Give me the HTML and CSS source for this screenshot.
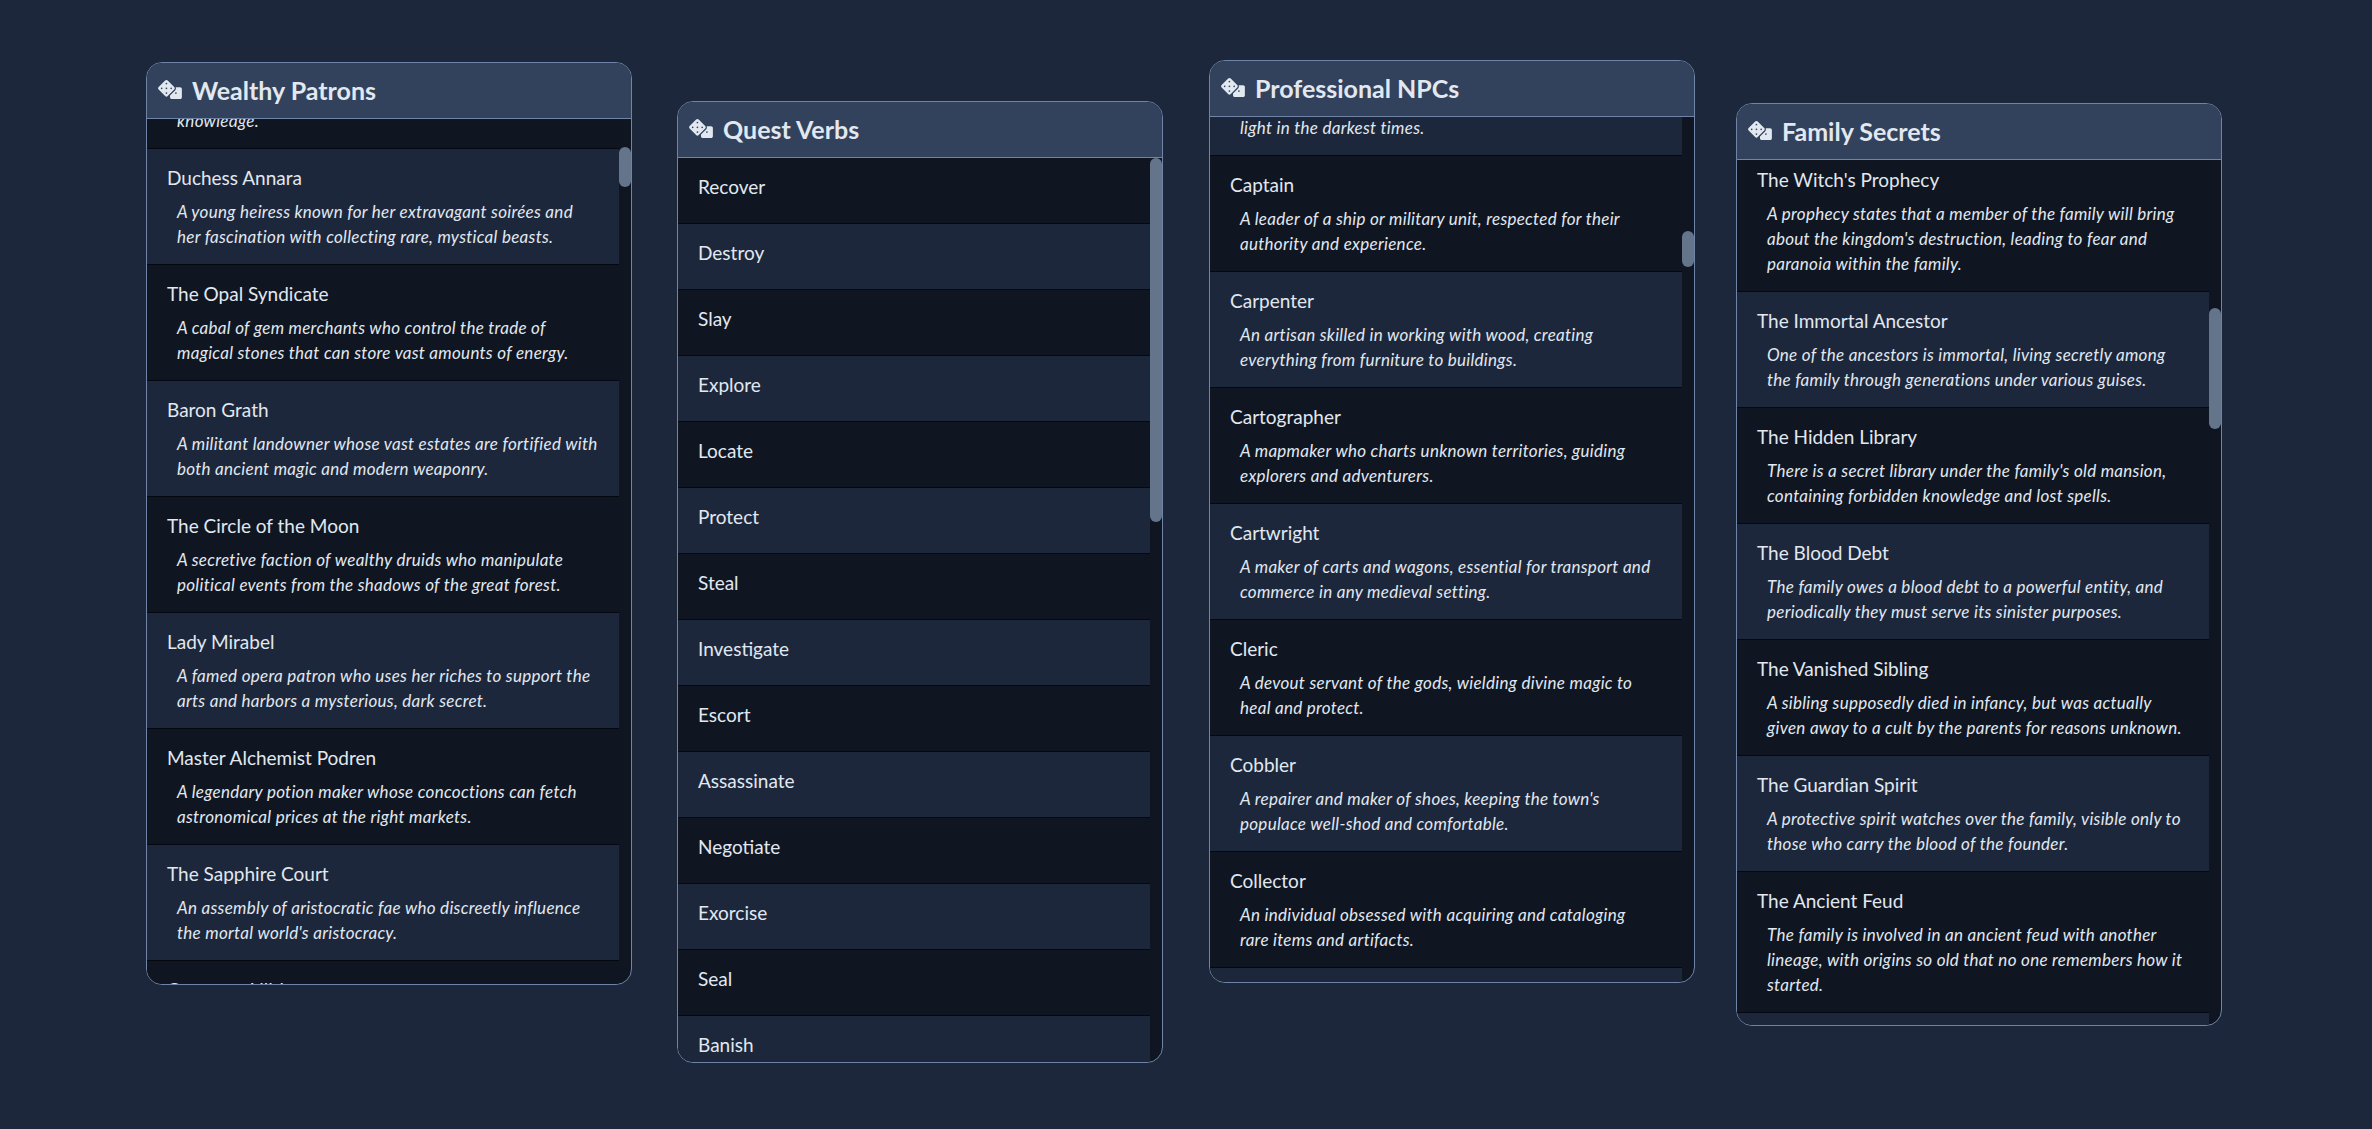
FILE: index.html
```html
<!DOCTYPE html>
<html>

<head>
  <meta charset="utf-8">
  <title>Random Tables</title>
  <link rel="stylesheet" href="styles.css">
</head>

<body>
  <svg class="defs">
    <symbol id="dice" viewBox="0 0 640 512">
      <path d="M592 192H473.26c12.69 29.59 7.12 65.2-17 89.32L320 417.58V464c0 26.51 21.49 48 48 48h224c26.51 0 48-21.49 48-48V240c0-26.51-21.49-48-48-48zM480 376c-13.25 0-24-10.75-24-24 0-13.26 10.75-24 24-24s24 10.74 24 24c0 13.25-10.75 24-24 24zm-46.37-186.7L258.7 14.37c-19.16-19.16-50.23-19.16-69.39 0L14.37 189.3c-19.16 19.16-19.16 50.23 0 69.39L189.3 433.63c19.16 19.16 50.23 19.16 69.39 0L433.63 258.7c19.17-19.17 19.17-50.24 0-69.4zM96 248c-13.25 0-24-10.75-24-24 0-13.26 10.75-24 24-24s24 10.74 24 24c0 13.25-10.75 24-24 24zm128 128c-13.25 0-24-10.75-24-24 0-13.26 10.75-24 24-24s24 10.74 24 24c0 13.25-10.75 24-24 24zm0-128c-13.25 0-24-10.75-24-24 0-13.26 10.75-24 24-24s24 10.74 24 24c0 13.25-10.75 24-24 24zm0-128c-13.25 0-24-10.75-24-24 0-13.26 10.75-24 24-24s24 10.74 24 24c0 13.25-10.75 24-24 24zm128 128c-13.25 0-24-10.75-24-24 0-13.26 10.75-24 24-24s24 10.74 24 24c0 13.25-10.75 24-24 24z" />
    </symbol>
  </svg>

  <div class="board">

    <section class="panel patrons">
      <h2 class="panel-head"><svg class="dice"><use href="#dice" /></svg>Wealthy Patrons</h2>
      <div class="list">
        <ul class="rows">
          <li class="row"><div class="name">The Arcane Benefactor</div><div class="desc">A reclusive collector who funds expeditions in search of lost<br>knowledge.</div></li>
          <li class="row"><div class="name">Duchess Annara</div><div class="desc">A young heiress known for her extravagant soirées and<br>her fascination with collecting rare, mystical beasts.</div></li>
          <li class="row"><div class="name">The Opal Syndicate</div><div class="desc">A cabal of gem merchants who control the trade of<br>magical stones that can store vast amounts of energy.</div></li>
          <li class="row"><div class="name">Baron Grath</div><div class="desc">A militant landowner whose vast estates are fortified with<br>both ancient magic and modern weaponry.</div></li>
          <li class="row"><div class="name">The Circle of the Moon</div><div class="desc">A secretive faction of wealthy druids who manipulate<br>political events from the shadows of the great forest.</div></li>
          <li class="row"><div class="name">Lady Mirabel</div><div class="desc">A famed opera patron who uses her riches to support the<br>arts and harbors a mysterious, dark secret.</div></li>
          <li class="row"><div class="name">Master Alchemist Podren</div><div class="desc">A legendary potion maker whose concoctions can fetch<br>astronomical prices at the right markets.</div></li>
          <li class="row"><div class="name">The Sapphire Court</div><div class="desc">An assembly of aristocratic fae who discreetly influence<br>the mortal world's aristocracy.</div></li>
          <li class="row"><div class="name">Countess Lilith</div></li>
        </ul>
        <div class="thumb"></div>
      </div>
    </section>

    <section class="panel verbs">
      <h2 class="panel-head"><svg class="dice"><use href="#dice" /></svg>Quest Verbs</h2>
      <div class="list">
        <ul class="rows">
          <li class="row"><div class="name">Recover</div></li>
          <li class="row"><div class="name">Destroy</div></li>
          <li class="row"><div class="name">Slay</div></li>
          <li class="row"><div class="name">Explore</div></li>
          <li class="row"><div class="name">Locate</div></li>
          <li class="row"><div class="name">Protect</div></li>
          <li class="row"><div class="name">Steal</div></li>
          <li class="row"><div class="name">Investigate</div></li>
          <li class="row"><div class="name">Escort</div></li>
          <li class="row"><div class="name">Assassinate</div></li>
          <li class="row"><div class="name">Negotiate</div></li>
          <li class="row"><div class="name">Exorcise</div></li>
          <li class="row"><div class="name">Seal</div></li>
          <li class="row"><div class="name">Banish</div></li>
        </ul>
        <div class="thumb"></div>
      </div>
    </section>

    <section class="panel npcs">
      <h2 class="panel-head"><svg class="dice"><use href="#dice" /></svg>Professional NPCs</h2>
      <div class="list">
        <ul class="rows">
          <li class="row"><div class="name">Candlemaker</div><div class="desc">A craftsman who makes candles and lanterns, providing<br>light in the darkest times.</div></li>
          <li class="row"><div class="name">Captain</div><div class="desc">A leader of a ship or military unit, respected for their<br>authority and experience.</div></li>
          <li class="row"><div class="name">Carpenter</div><div class="desc">An artisan skilled in working with wood, creating<br>everything from furniture to buildings.</div></li>
          <li class="row"><div class="name">Cartographer</div><div class="desc">A mapmaker who charts unknown territories, guiding<br>explorers and adventurers.</div></li>
          <li class="row"><div class="name">Cartwright</div><div class="desc">A maker of carts and wagons, essential for transport and<br>commerce in any medieval setting.</div></li>
          <li class="row"><div class="name">Cleric</div><div class="desc">A devout servant of the gods, wielding divine magic to<br>heal and protect.</div></li>
          <li class="row"><div class="name">Cobbler</div><div class="desc">A repairer and maker of shoes, keeping the town's<br>populace well-shod and comfortable.</div></li>
          <li class="row"><div class="name">Collector</div><div class="desc">An individual obsessed with acquiring and cataloging<br>rare items and artifacts.</div></li>
          <li class="row"><div class="name">Cook</div></li>
        </ul>
        <div class="thumb"></div>
      </div>
    </section>

    <section class="panel secrets">
      <h2 class="panel-head"><svg class="dice"><use href="#dice" /></svg>Family Secrets</h2>
      <div class="list">
        <ul class="rows">
          <li class="row"><div class="name">The Witch's Prophecy</div><div class="desc">A prophecy states that a member of the family will bring<br>about the kingdom's destruction, leading to fear and<br>paranoia within the family.</div></li>
          <li class="row"><div class="name">The Immortal Ancestor</div><div class="desc">One of the ancestors is immortal, living secretly among<br>the family through generations under various guises.</div></li>
          <li class="row"><div class="name">The Hidden Library</div><div class="desc">There is a secret library under the family's old mansion,<br>containing forbidden knowledge and lost spells.</div></li>
          <li class="row"><div class="name">The Blood Debt</div><div class="desc">The family owes a blood debt to a powerful entity, and<br>periodically they must serve its sinister purposes.</div></li>
          <li class="row"><div class="name">The Vanished Sibling</div><div class="desc">A sibling supposedly died in infancy, but was actually<br>given away to a cult by the parents for reasons unknown.</div></li>
          <li class="row"><div class="name">The Guardian Spirit</div><div class="desc">A protective spirit watches over the family, visible only to<br>those who carry the blood of the founder.</div></li>
          <li class="row"><div class="name">The Ancient Feud</div><div class="desc">The family is involved in an ancient feud with another<br>lineage, with origins so old that no one remembers how it<br>started.</div></li>
          <li class="row"><div class="name">The Cursed Heirloom</div></li>
        </ul>
        <div class="thumb"></div>
      </div>
    </section>

  </div>
</body>

</html>
```

FILE: styles.css
```css
body {
  margin: 0;
  height: 1129px;
  overflow: hidden;
  background-color: #1c273b;
  font-family: Lato, "Noto Sans", sans-serif;
  color: #e2e8f0;
}

.defs {
  display: none;
}

.board {
  display: flex;
  align-items: flex-start;
  padding-left: 146px;
}

/* panels are placed like a loose masonry, each has its own drop */
.panel {
  display: flex;
  flex-direction: column;
  flex: none;
  box-sizing: border-box;
  width: 486px;
  height: 923px;
  overflow: hidden;
  background-color: #0f1622;
  border: 1px solid #6f84a6;
  border-radius: 16px;
}

.patrons {
  margin-top: 62px;
}

.verbs {
  margin-top: 101px;
  margin-left: 45px;
  height: 962px;
}

.npcs {
  margin-top: 60px;
  margin-left: 46px;
}

.secrets {
  margin-top: 103px;
  margin-left: 41px;
}

.panel-head {
  display: flex;
  align-items: center;
  gap: 10px;
  flex: none;
  box-sizing: border-box;
  height: 56px;
  margin: 0;
  padding: 0 11px 2px;
  background-color: #32425c;
  border-bottom: 1px solid #6f84a6;
  font-size: 25px;
  font-weight: 700;
}

.dice {
  flex: none;
  width: 24px;
  height: 19px;
  fill: #e2e8f0;
}

.list {
  position: relative;
  flex: 1;
  min-height: 0;
  overflow: hidden;
  padding-right: 12px;
}

.rows {
  margin: 0;
  padding: 0;
  list-style: none;
}

/* the lists are shown scrolled part way down */
.patrons .rows {
  margin-top: -86px;
}

.npcs .rows {
  margin-top: -77px;
}

.secrets .rows {
  margin-top: -9px;
}

.row {
  padding: 16px 20px 15px;
  background-color: #0f1622;
  border-bottom: 1px solid #05080f;
}

.row:nth-child(even) {
  background-color: #1c273b;
}

.npcs .row:nth-child(odd) {
  background-color: #1c273b;
}

.npcs .row:nth-child(even) {
  background-color: #0f1622;
}

.name {
  height: 25px;
  margin-bottom: 9px;
  font-size: 19px;
  line-height: 25px;
}

.desc {
  margin-left: 10px;
  font-size: 17px;
  font-style: italic;
  line-height: 25px;
  letter-spacing: 0.28px;
  white-space: nowrap;
  color: #e2e8f0;
}

.thumb {
  position: absolute;
  right: 0;
  width: 12px;
  background-color: #64748b;
  border-radius: 6px;
}

.patrons .thumb {
  top: 28px;
  height: 40px;
}

.verbs .thumb {
  top: 0;
  height: 364px;
}

.npcs .thumb {
  top: 114px;
  height: 36px;
}

.secrets .thumb {
  top: 148px;
  height: 121px;
}
```
